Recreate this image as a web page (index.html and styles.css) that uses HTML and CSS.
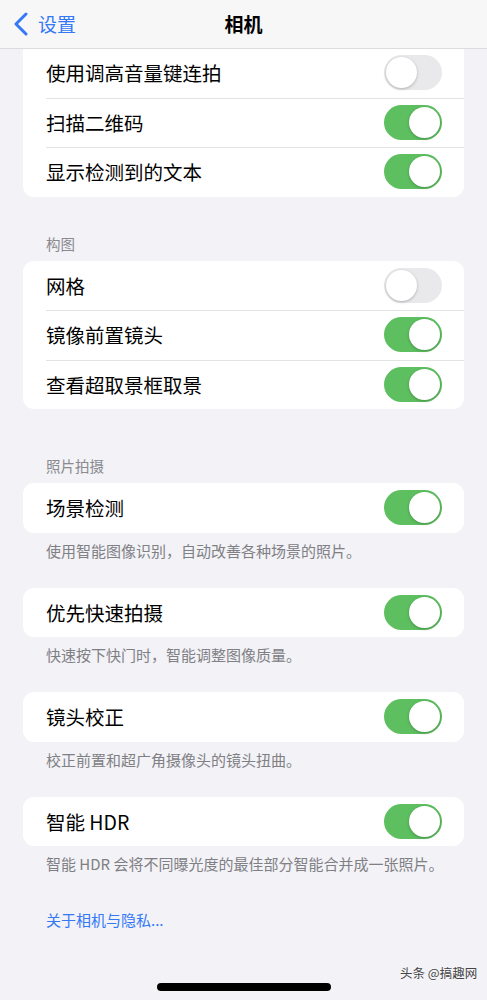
FILE: index.html
```html
<!DOCTYPE html>
<html>
<head>
<meta name="viewport" content="width=device-width, initial-scale=1">
<link rel="stylesheet" href="styles.css">
</head>
<body>
<div class="screen">

  <div class="navbar">
    <div class="back">
      <svg width="16" height="24" viewBox="0 0 16 24"><polyline points="13,2 3,12 13,22" fill="none" stroke="#3478f6" stroke-width="3" stroke-linecap="round" stroke-linejoin="round"/></svg>
      <span>设置</span>
    </div>
    <div class="title">相机</div>
  </div>

  <div class="card card-top">
    <div class="row"><span>使用调高音量键连拍</span><div class="toggle"></div></div>
    <div class="row"><span>扫描二维码</span><div class="toggle on"></div></div>
    <div class="row"><span>显示检测到的文本</span><div class="toggle on"></div></div>
  </div>

  <div class="header first">构图</div>
  <div class="card">
    <div class="row"><span>网格</span><div class="toggle"></div></div>
    <div class="row"><span>镜像前置镜头</span><div class="toggle on"></div></div>
    <div class="row"><span>查看超取景框取景</span><div class="toggle on"></div></div>
  </div>

  <div class="header">照片拍摄</div>
  <div class="card">
    <div class="row"><span>场景检测</span><div class="toggle on"></div></div>
  </div>
  <div class="footer">使用智能图像识别，自动改善各种场景的照片。</div>

  <div class="card">
    <div class="row"><span>优先快速拍摄</span><div class="toggle on"></div></div>
  </div>
  <div class="footer">快速按下快门时，智能调整图像质量。</div>

  <div class="card">
    <div class="row"><span>镜头校正</span><div class="toggle on"></div></div>
  </div>
  <div class="footer">校正前置和超广角摄像头的镜头扭曲。</div>

  <div class="card">
    <div class="row"><span>智能 HDR</span><div class="toggle on"></div></div>
  </div>
  <div class="footer">智能 HDR 会将不同曝光度的最佳部分智能合并成一张照片。</div>

  <div class="link">关于相机与隐私...</div>

  <div class="watermark">头条 @搞趣网</div>
  <div class="home-bar"></div>
</div>
</body>
</html>
```

FILE: styles.css
```css
* {
  box-sizing: border-box;
}

body {
  margin: 0;
  background: #f2f2f7;
  font-family: "Noto Sans CJK SC", "Noto Sans", sans-serif;
  color: #000;
}

.screen {
  position: relative;
  width: 487px;
  height: 1000px;
  overflow: hidden;
}

.navbar {
  height: 49px;
  background: #f7f7f8;
  border-bottom: 1px solid #dcdcde;
  display: flex;
  align-items: center;
  justify-content: center;
  position: relative;
}

.back {
  position: absolute;
  left: 13px;
  top: 12px;
  display: flex;
  align-items: center;
  gap: 9px;
  color: #3478f6;
  font-size: 19px;
  line-height: 24px;
}

.title {
  font-size: 19px;
  font-weight: 700;
  line-height: 24px;
}

.card {
  margin: 0 23px;
  background: #fff;
  border-radius: 11px;
  overflow: hidden;
}

.card-top {
  margin-top: -1px;
  border-radius: 0 0 11px 11px;
}

.row {
  height: 49.5px;
  display: flex;
  align-items: center;
  justify-content: space-between;
  padding: 0 22px 0 23px;
  font-size: 19.5px;
  position: relative;
}

.row + .row::before {
  content: "";
  position: absolute;
  left: 23px;
  right: 0;
  top: 0;
  border-top: 1px solid #e3e3e6;
}

.toggle {
  width: 58px;
  height: 35px;
  border-radius: 18px;
  background: #e9e9eb;
  position: relative;
}

.toggle::after {
  content: "";
  position: absolute;
  top: 2px;
  left: 2px;
  width: 31px;
  height: 31px;
  border-radius: 50%;
  background: #fff;
  box-shadow: 0 1px 3px rgba(0, 0, 0, 0.25);
}

.toggle.on {
  background: #5dbf5f;
}

.toggle.on::after {
  left: 25px;
}

.header {
  margin: 48px 46px 8px;
  font-size: 14.5px;
  line-height: 18px;
  color: #8a8a8e;
}

.header.first {
  margin-top: 38px;
}

.footer {
  margin: 8px 10px 27px 46px;
  font-size: 15px;
  line-height: 20px;
  color: #808084;
  white-space: nowrap;
}

.link {
  margin: 36px 46px 0;
  font-size: 15px;
  line-height: 20px;
  color: #3478f6;
}

.watermark {
  position: absolute;
  left: 400px;
  top: 963px;
  font-size: 12.5px;
  color: #444;
  text-shadow: 0 0 2px #fff;
}

.home-bar {
  position: absolute;
  left: 157px;
  top: 983px;
  width: 174px;
  height: 8px;
  border-radius: 4px;
  background: #000;
}
```
